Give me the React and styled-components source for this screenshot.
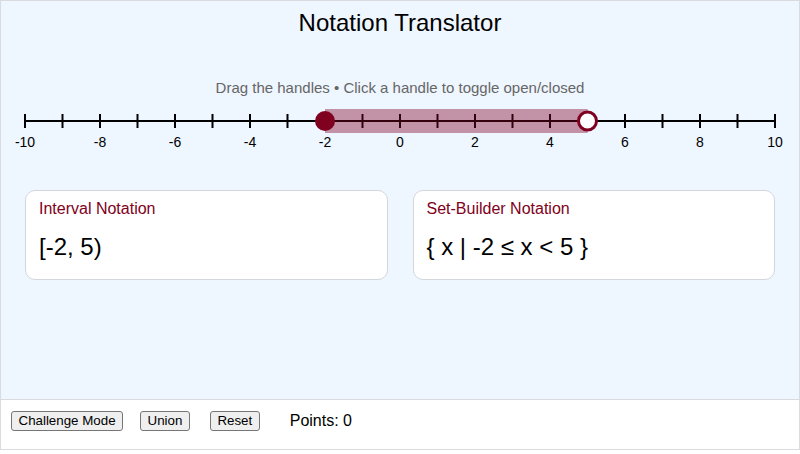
import React, { useState } from "react";
import styled, { createGlobalStyle } from "styled-components";

const GlobalStyle = createGlobalStyle`
  html, body {
    margin: 0;
    padding: 0;
    background: #ffffff;
  }
  body {
    font-family: "Liberation Sans", Arial, sans-serif;
  }
`;

const MAROON = "#800020";

const Frame = styled.div`
  width: 800px;
  height: 450px;
  box-sizing: border-box;
  border: 1px solid #d9dbde;
  display: flex;
  flex-direction: column;
`;

const Stage = styled.div`
  height: 399px;
  box-sizing: border-box;
  background: #eef6ff;
  border-bottom: 1px solid #d9dbde;
  display: flex;
  flex-direction: column;
  align-items: stretch;
`;

const Title = styled.h1`
  margin: 0;
  padding-top: 8px;
  font-size: 24px;
  line-height: 28px;
  font-weight: normal;
  text-align: center;
  color: #000;
`;

const Hint = styled.div`
  margin-top: 42px;
  font-size: 15px;
  line-height: 18px;
  color: #666666;
  text-align: center;
`;

const LineSvg = styled.svg`
  display: block;
  width: 798px;
  height: 64px;
`;

const Cards = styled.div`
  margin-top: 29px;
  padding: 0 24px;
  display: grid;
  grid-template-columns: 1fr 1fr;
  gap: 25px;
`;

const Card = styled.div`
  height: 90px;
  box-sizing: border-box;
  background: #ffffff;
  border: 1px solid #d3d7dc;
  border-radius: 10px;
  padding: 9px 13px;
`;

const CardLabel = styled.div`
  font-size: 16px;
  line-height: 18px;
  color: ${MAROON};
`;

const CardValue = styled.div`
  margin-top: 15px;
  font-size: 24px;
  line-height: 28px;
  color: #000;
`;

const Controls = styled.div`
  flex: 1;
  background: #ffffff;
  padding: 11px 10px 0;
  display: flex;
  align-items: flex-start;
`;

const Button = styled.button`
  margin-left: ${(p) => p.$gap || 0}px;
  font-family: "Liberation Sans", Arial, sans-serif;
  font-size: 13.33px;
  line-height: 16px;
  padding: 1px 6.5px;
  color: #000;
  background: #efefef;
  border: 1px solid #767676;
  border-radius: 3px;
  cursor: pointer;
`;

const Points = styled.span`
  margin-left: ${(p) => p.$gap || 0}px;
  margin-top: 1px;
  font-size: 16px;
  line-height: 18px;
  color: #000;
`;

const px = (v) => 24 + (v + 10) * 37.5;
const LINE_Y = 24;

function NumberLine({ lo, hi, loClosed, hiClosed }) {
  const ticks = [];
  for (let v = -10; v <= 10; v++) ticks.push(v);
  return (
    <LineSvg viewBox="0 0 798 64">
      <line x1={px(-10)} y1={LINE_Y} x2={px(10)} y2={LINE_Y} stroke="#000" strokeWidth="2" />
      {ticks.map((v) => (
        <line key={v} x1={px(v)} y1={LINE_Y - 7} x2={px(v)} y2={LINE_Y + 7} stroke="#000" strokeWidth="2" />
      ))}
      {ticks
        .filter((v) => v % 2 === 0)
        .map((v) => (
          <text
            key={"l" + v}
            x={px(v)}
            y={50}
            textAnchor="middle"
            fontSize="14"
            fontFamily="Liberation Sans, Arial, sans-serif"
            fill="#000"
          >
            {v}
          </text>
        ))}
      <rect
        x={px(lo)}
        y={LINE_Y - 12}
        width={px(hi) - px(lo)}
        height={24}
        fill={MAROON}
        fillOpacity="0.4"
      />
      <circle
        cx={px(lo)}
        cy={LINE_Y}
        r={loClosed ? 10 : 9}
        fill={loClosed ? MAROON : "#fff"}
        stroke={MAROON}
        strokeWidth={loClosed ? 0 : 3}
      />
      <circle
        cx={px(hi)}
        cy={LINE_Y}
        r={hiClosed ? 10 : 9}
        fill={hiClosed ? MAROON : "#fff"}
        stroke={MAROON}
        strokeWidth={hiClosed ? 0 : 3}
      />
    </LineSvg>
  );
}

export default function App() {
  const [lo] = useState(-2);
  const [hi] = useState(5);
  const [loClosed] = useState(true);
  const [hiClosed] = useState(false);
  const [points] = useState(0);

  const interval = `${loClosed ? "[" : "("}${lo}, ${hi}${hiClosed ? "]" : ")"}`;
  const setBuilder = `{ x | ${lo} ${loClosed ? "≤" : "<"} x ${hiClosed ? "≤" : "<"} ${hi} }`;

  return (
    <>
      <GlobalStyle />
      <Frame>
        <Stage>
          <Title>Notation Translator</Title>
          <Hint>Drag the handles • Click a handle to toggle open/closed</Hint>
          <NumberLine lo={lo} hi={hi} loClosed={loClosed} hiClosed={hiClosed} />
          <Cards>
            <Card>
              <CardLabel>Interval Notation</CardLabel>
              <CardValue>{interval}</CardValue>
            </Card>
            <Card>
              <CardLabel>Set-Builder Notation</CardLabel>
              <CardValue>{setBuilder}</CardValue>
            </Card>
          </Cards>
        </Stage>
        <Controls>
          <Button>Challenge Mode</Button>
          <Button $gap={17}>Union</Button>
          <Button $gap={20}>Reset</Button>
          <Points $gap={30}>Points: {points}</Points>
        </Controls>
      </Frame>
    </>
  );
}
